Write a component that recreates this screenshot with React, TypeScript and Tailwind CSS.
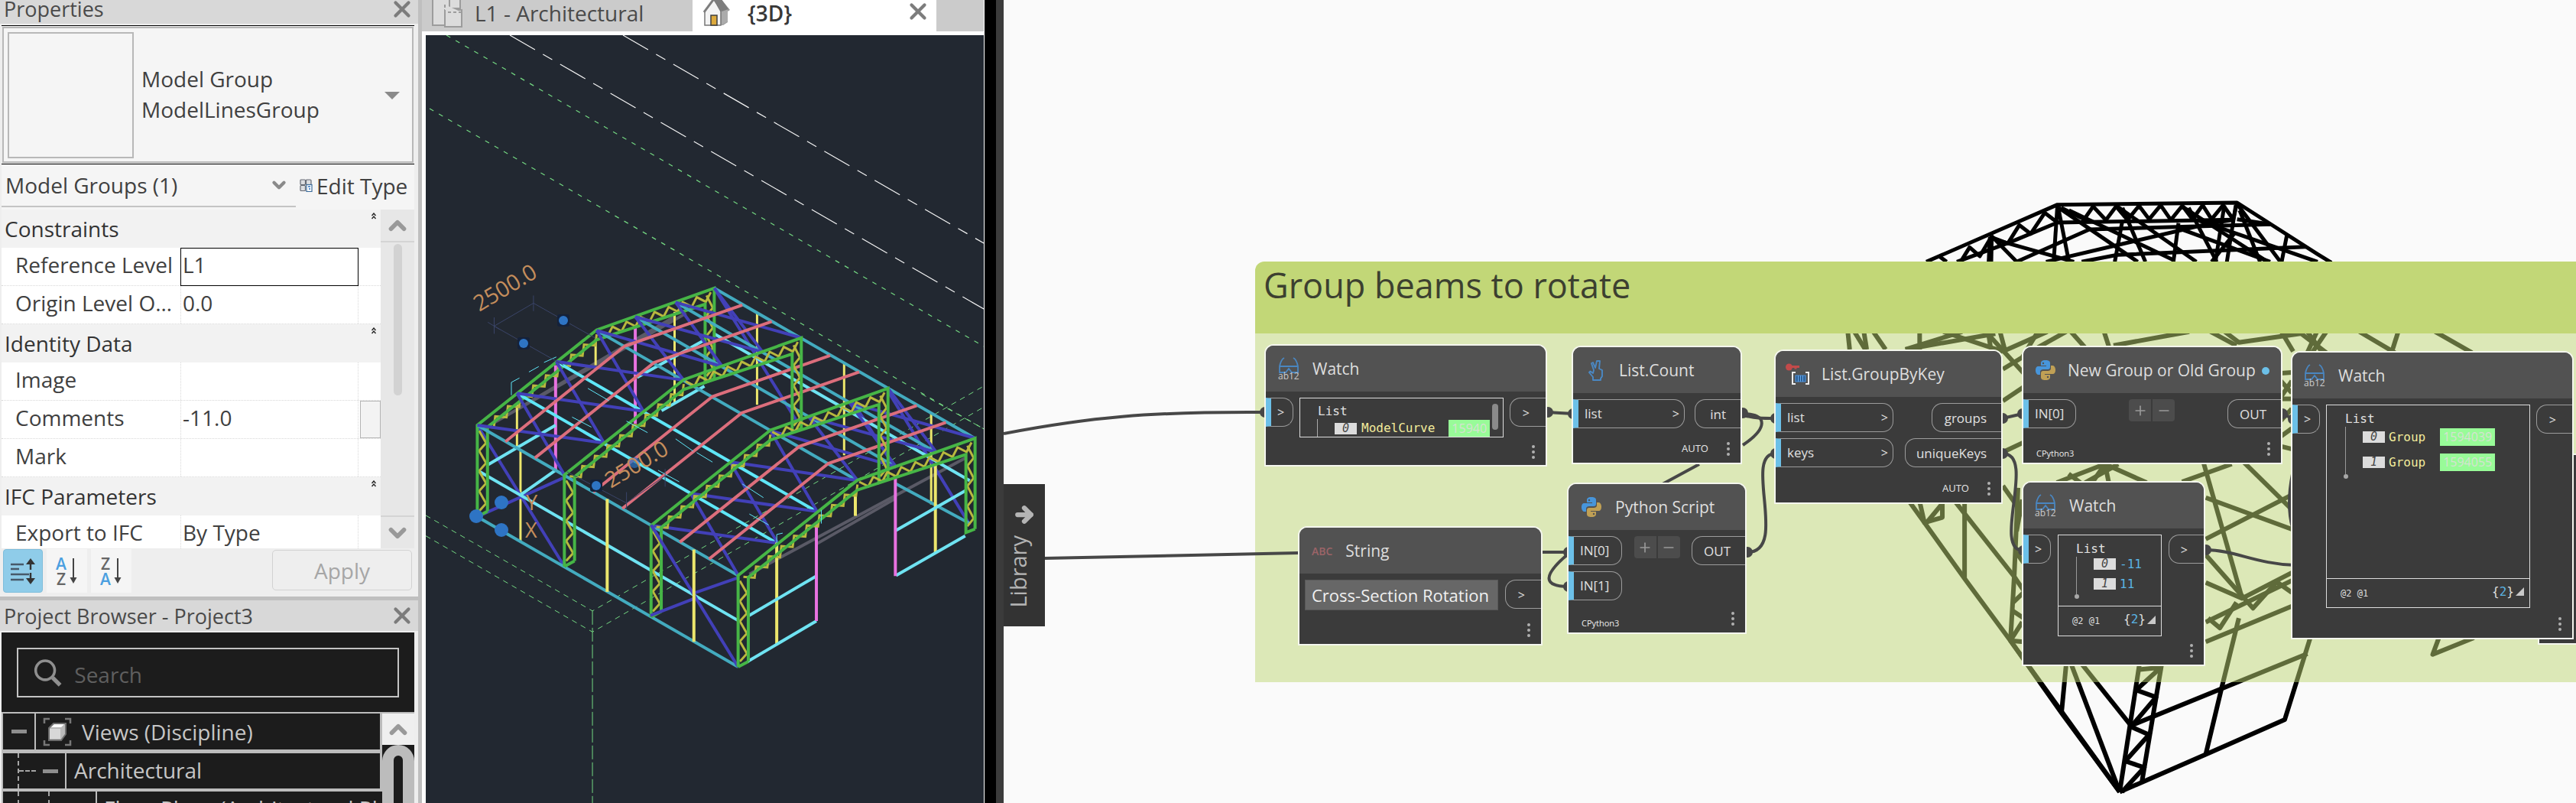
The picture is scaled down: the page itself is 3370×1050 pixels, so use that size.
import React from "react";
import { X, Plus, Minus, ArrowRight, ChevronDown, ChevronUp } from "lucide-react";

type Pt = [number, number];

/* ---------- Properties palette ---------- */

function PropHeader({ title }: { title: string }) {
  return (
    <div className="flex h-[50px] items-center justify-between bg-[#f2f2f2] pl-1 pr-[6px]">
      <h3 className="text-[28px] leading-[50px] text-[#333]">{title}</h3>
      <svg viewBox="0 0 6 9" className="mt-[-33px] h-[9px] w-[6px]" fill="none" stroke="#222" strokeWidth="1.4">
        <path d="M.5 4 3 1l2.5 3M.5 8 3 5l2.5 3" />
      </svg>
    </div>
  );
}

function PropRow({ label, value, boxed, button }: { label: string; value: string; boxed?: boolean; button?: boolean }) {
  const id = "prop-" + label.toLowerCase().replace(/[^a-z]+/g, "-");
  return (
    <div className="grid h-[50px] grid-cols-[234px_233px_1fr] border-b border-dotted border-[#d8d8d8] bg-white text-[28px] text-[#404040]">
      <label htmlFor={id} className="truncate pl-[18px] leading-[44px]">
        {label}
      </label>
      <input
        id={id}
        defaultValue={value}
        className={
          boxed
            ? "w-full border border-black bg-white pb-[6px] pl-[2px] outline-none"
            : "w-full border-x border-dotted border-[#d8d8d8] bg-white pb-[6px] pl-[2px] outline-none"
        }
      />
      {button ? (
        <div className="flex items-stretch pl-[2px]">
          <button aria-label="Browse" className="w-[27px] border border-[#b4b4b4] bg-[#f3f3f3]" />
        </div>
      ) : (
        <span />
      )}
    </div>
  );
}

function SortIcon({ top, bottom }: { top: string; bottom: string }) {
  const blue = "text-[#4a9fe0]";
  const gray = "text-[#666]";
  return (
    <span className="flex items-center gap-[3px]">
      <span className="flex flex-col text-[21px] font-semibold leading-[20px]">
        <span className={top === "A" ? blue : gray}>{top}</span>
        <span className={bottom === "A" ? blue : gray}>{bottom}</span>
      </span>
      <svg viewBox="0 0 12 34" className="h-[34px] w-3" fill="#444" stroke="#444" strokeWidth="2">
        <path d="M6 0v26" />
        <path d="M1.5 25h9L6 33z" stroke="none" />
      </svg>
    </span>
  );
}

function Properties() {
  return (
    <section className="shrink-0">
      <header className="flex h-[31px] items-center justify-between bg-[#d8d8d8] pl-[5px] pr-[4px]">
        <h2 className="mt-[-8px] text-[27px] leading-[32px] text-[#4a4a4a]">Properties</h2>
        <button aria-label="Close properties" className="-mt-2">
          <X size={34} strokeWidth={3} color="#7c7c7c" />
        </button>
      </header>
      <div className="mx-[2px] mr-[5px] pt-[2px]">
        <div className="border-y border-black py-[1px]">
          <div className="mx-[1px] flex h-[178px] items-start border-2 border-[#b8b8b8] bg-[#f5f5f5] p-[5px]">
            <div className="h-[165px] w-[165px] border-2 border-[#b8b8b8]" />
            <p className="ml-[10px] mt-[41px] text-[28px] leading-[40px] text-[#404040]">
              Model Group
              <br />
              ModelLinesGroup
            </p>
            <button aria-label="Choose type" className="ml-auto mr-[11px] mt-[78px]">
              <svg viewBox="0 0 20 10" className="h-[10px] w-5" fill="#8a8a8a">
                <path d="M0 0h20L10 10z" />
              </svg>
            </button>
          </div>
        </div>
        <div className="flex h-[59px] bg-[#f5f5f5] text-[28px] text-[#404040]">
          <button className="mb-[3px] flex w-[385px] items-center justify-between border-b-2 border-[#c4c4c4] pl-[5px] pr-[9px]">
            <span>Model Groups (1)</span>
            <ChevronDown size={26} strokeWidth={4} color="#8a8a8a" />
          </button>
          <button className="ml-[5px] flex items-center gap-[5px] pb-1">
            <svg viewBox="0 0 17 17" className="h-[17px] w-[17px]" fill="#dcdde0" stroke="#666b75" strokeWidth="1.2">
              <rect x="1" y="1" width="6.5" height="6.5" rx="1" />
              <rect x="8.5" y="1" width="6.5" height="6.5" rx="1" />
              <rect x="1" y="8.5" width="6.5" height="7" rx="1" />
              <rect x="9" y="7.5" width="7" height="9" fill="#fff" stroke="#3d6d9c" />
              <path d="M11 10h3M12 13h2" stroke="#2a6fc0" strokeWidth="1.6" />
            </svg>
            <span>Edit Type</span>
          </button>
        </div>
        <div className="flex h-[443px]">
          <div className="w-[496px] overflow-hidden">
            <PropHeader title="Constraints" />
            <PropRow label="Reference Level" value="L1" boxed />
            <PropRow label="Origin Level Offset" value="0.0" />
            <PropHeader title="Identity Data" />
            <PropRow label="Image" value="" />
            <PropRow label="Comments" value="-11.0" button />
            <PropRow label="Mark" value="" />
            <PropHeader title="IFC Parameters" />
            <PropRow label="Export to IFC" value="By Type" />
          </div>
          <div className="flex flex-1 flex-col items-center bg-[#e7e7e7]">
            <div className="flex h-[43px] w-full items-center justify-center border-b-2 border-[#d4d4d4]">
              <ChevronUp size={34} strokeWidth={4} color="#999" />
            </div>
            <div className="mt-[2px] h-[198px] w-[11px] rounded-full bg-[#d2d2d2]" />
            <div className="mt-auto flex h-[43px] w-full items-center justify-center border-t-2 border-[#d4d4d4]">
              <ChevronDown size={34} strokeWidth={4} color="#999" />
            </div>
          </div>
        </div>
      </div>
      <div className="flex h-[63px] items-start gap-[5px] pl-1 pr-[8px] pt-[1px]">
        <button aria-label="Sort by order" className="flex h-[57px] w-[52px] items-center justify-center rounded-[4px] border border-[#7fbddb] bg-[#8fcce9]">
          <svg viewBox="0 0 34 34" className="h-[34px] w-[34px]" stroke="#333" fill="#333" strokeWidth="2.4">
            <path d="M1 8h17M1 14h11M1 21h24M1 28h17" stroke="#47596a" />
            <path d="M27 4v11M27 19v11" />
            <path d="M21 8h12L27 0zM21 26h12l-6 8z" stroke="none" />
          </svg>
        </button>
        <button aria-label="Sort ascending" className="flex h-[57px] w-[53px] items-center justify-center bg-[#f5f5f5]">
          <SortIcon top="A" bottom="Z" />
        </button>
        <button aria-label="Sort descending" className="flex h-[57px] w-[53px] items-center justify-center bg-[#f5f5f5]">
          <SortIcon top="Z" bottom="A" />
        </button>
        <button disabled className="ml-auto mt-[1px] h-[53px] w-[183px] rounded-[5px] border border-[#d2d2d2] text-[28px] text-[#a6a6a6]">
          Apply
        </button>
      </div>
    </section>
  );
}

/* ---------- Project browser ---------- */

function ProjectBrowser() {
  return (
    <section className="flex min-h-0 flex-1 flex-col border-t-[5px] border-[#bfbfbf]">
      <header className="flex h-[40px] shrink-0 items-center justify-between bg-[#d8d8d8] pl-[5px] pr-[4px]">
        <h2 className="pt-[2px] text-[27px] leading-[38px] text-[#4a4a4a]">Project Browser - Project3</h2>
        <button aria-label="Close project browser">
          <X size={34} strokeWidth={3} color="#7c7c7c" />
        </button>
      </header>
      <div className="ml-[2px] mr-[5px] mt-[2px] shrink-0 bg-[#1c1c1c] px-5 pb-[19px] pt-5">
        <label className="flex h-[65px] items-center gap-[16px] border-2 border-[#c4c4c4] pl-[20px]">
          <svg viewBox="0 0 42 42" className="h-[42px] w-[42px]" fill="none" stroke="#8f8f8f" strokeWidth="4">
            <circle cx="17" cy="17" r="14" />
            <path d="m28 28 11 11" strokeWidth="6" />
          </svg>
          <input
            type="search"
            aria-label="Search"
            placeholder="Search"
            className="w-full bg-transparent pt-[4px] text-[28px] text-[#6a6a6a] outline-none placeholder:text-[#5f5f5f]"
          />
        </label>
      </div>
      <div className="ml-[2px] mr-[5px] flex min-h-0 flex-1 overflow-hidden border-l-2 border-t-2 border-[#bcbcbc]">
        <div className="flex w-[496px] shrink-0 flex-col text-[28px] text-[#c6c6c6]">
          <div className="flex h-[52px] shrink-0 border-b-[5px] border-[#bcbcbc] bg-[#1c1c1c]">
            <span className="flex w-[43px] items-center justify-center border-r-2 border-[#bcbcbc]">
              <span className="h-[5px] w-5 bg-[#8e8e8e]" />
            </span>
            <span className="flex flex-1 items-center gap-[13px] border-r-[3px] border-[#bcbcbc] pl-[9px]">
              <svg viewBox="0 0 38 38" className="h-[38px] w-[38px]" fill="none">
                <path d="M2 8V2h7M29 2h7v6M36 30v6h-7M9 36H2v-6" stroke="#777" strokeWidth="2.5" />
                <path d="m8 14 6-6h16v14l-6 8H8z" fill="#b9b9b9" stroke="#6d6d6d" strokeWidth="2" />
                <path d="M9 15h14v13H9z" fill="#d8d8d8" />
                <path d="m11 13 4-4h13l-4 4z" fill="#fff" />
              </svg>
              Views (Discipline)
            </span>
          </div>
          <div className="flex h-[50px] shrink-0 border-b-[4px] border-[#bcbcbc] bg-[#1c1c1c]">
            <span className="flex w-[83px] items-center border-r-2 border-[#bcbcbc] pl-[19px]">
              <span className="h-full border-l-2 border-dashed border-[#a5a5a5]" />
              <span className="w-[22px] border-t-2 border-dashed border-[#a5a5a5]" />
              <span className="ml-[9px] h-[5px] w-5 bg-[#8e8e8e]" />
            </span>
            <span className="flex flex-1 items-center border-r-[3px] border-[#bcbcbc] pb-[2px] pl-[10px]">Architectural</span>
          </div>
          <div className="flex h-[50px] shrink-0 bg-[#1c1c1c]">
            <span className="flex w-[123px] border-r-2 border-[#bcbcbc] pl-[19px]">
              <span className="h-full border-l-2 border-dashed border-[#a5a5a5]" />
              <span className="ml-[38px] h-full border-l-2 border-dashed border-[#a5a5a5]" />
            </span>
            <span className="flex-1 overflow-hidden whitespace-nowrap pl-[9px] leading-[44px]">Floor Plans (Architectural Plan)</span>
          </div>
        </div>
        <div className="flex flex-1 flex-col bg-[#1c1c1c]">
          <div className="flex h-[41px] shrink-0 items-center justify-center bg-[#efefef]">
            <ChevronUp size={34} strokeWidth={4} color="#999" />
          </div>
          <div className="flex h-[160px] shrink-0 justify-center rounded-t-full bg-[#bcbcbc] pt-[14px]">
            <div className="w-[12px] rounded-t-full bg-[#1c1c1c]" />
          </div>
        </div>
      </div>
    </section>
  );
}

/* ---------- 3D view ---------- */

const add = (p: Pt, d: Pt): Pt => [p[0] + d[0], p[1] + d[1]];
const str = (pts: Pt[]) => pts.map((p) => p.join(",")).join(" ");

const RAFTER: Pt[] = [[75, 605], [188, 488], [300, 372], [415, 258], [525, 208], [640, 155], [750, 103]];
const FRAME_OFFSETS: Pt[] = [[0, 0], [248, 182], [495, 367], [743, 550]];
const PURLIN_COLORS = ["#43abbf", "#5fe6f7", "#5fe6f7", "#43abbf", "#43abbf", "#43abbf", "#43abbf"];

function zigzag(a: Pt, b: Pt, inset: Pt, n: number): Pt[] {
  const pts: Pt[] = [];
  for (let i = 0; i <= n; i++) {
    const t = i / n;
    const p: Pt = [a[0] + (b[0] - a[0]) * t, a[1] + (b[1] - a[1]) * t];
    pts.push(i % 2 ? add(p, inset) : p);
  }
  return pts;
}

function Lines({ d, c, w = 3 }: { d: string[]; c: string; w?: number }) {
  return (
    <g stroke={c} strokeWidth={w} fill="none">
      {d.map((p) => (
        <polyline key={p} points={p} vectorEffect="non-scaling-stroke" />
      ))}
    </g>
  );
}

function Frame({ o }: { o: Pt }) {
  const at = (x: number, y: number): Pt => [x + o[0], y + o[1]];
  const green = [
    str([at(75, 940), at(75, 605), at(415, 256), at(750, 103), at(750, 435)]),
    str([at(104, 920), at(104, 612), at(415, 292), at(724, 162), at(724, 448), at(750, 435)]),
    str([at(75, 940), at(104, 920)]),
  ];
  const web = [
    str(zigzag(at(90, 610), at(415, 272), [14, 22], 18)),
    str(zigzag(at(420, 262), at(740, 118), [6, 26], 16)),
    str(zigzag(at(80, 625), at(80, 920), [20, 8], 8)),
    str(zigzag(at(728, 130), at(728, 425), [18, 8], 8)),
  ];
  return (
    <>
      <Lines d={web} c="#b9b83e" w={3} />
      <Lines d={green} c="#46b546" w={4} />
    </>
  );
}

function BuildingModel() {
  const purlins = RAFTER.map((p, i) => ({ d: str([p, add(p, [743, 550])]), c: PURLIN_COLORS[i] }));
  const braces: string[] = [];
  for (const base of [FRAME_OFFSETS[0], FRAME_OFFSETS[2]]) {
    for (let i = 0; i < 6; i++) {
      const a = add(RAFTER[i], base);
      const b = add(RAFTER[i + 1], base);
      const c = add(RAFTER[i], add(base, [248, 182]));
      const d = add(RAFTER[i + 1], add(base, [248, 182]));
      braces.push(str([a, d]), str([b, c]));
    }
  }
  const ties: Pt[] = [[0, 0], [84, 60], [250, 185], [333, 245], [497, 368], [580, 430]];
  return (
    <g transform="translate(33 294) scale(.4592 .3571)">
      <g stroke="#74d982" fill="none" strokeDasharray="7 6" strokeWidth="1">
        <polyline points="-72,935 403,1285 1520,460" vectorEffect="non-scaling-stroke" />
        <polyline points="-72,1010 403,1362 1520,537" vectorEffect="non-scaling-stroke" />
        <polyline points="403,1285 403,2000" vectorEffect="non-scaling-stroke" strokeDasharray="18 4" />
        <polyline points="1340,490 1520,620" vectorEffect="non-scaling-stroke" />
      </g>
      <Lines c="#5a5a66" w={4} d={["110,605 670,195", "190,545 640,205", "850,1150 1465,725", "1041,1040 1268,872"]} />
      <Lines c="#e872e0" w={4} d={["298,385 298,770", "525,245 525,600"]} />
      <Lines c="#ece66c" w={3} d={["188,525 188,690", "198,700 198,1030", "412,290 412,385", "637,190 637,525", "872,190 872,530", "1120,380 1120,715", "1368,560 1368,895"]} />
      <Lines c="#4240b8" w={4} d={["75,605 322,1120", "75,940 325,795", "750,103 985,590", "1245,480 1478,970", "1150,530 1260,750"]} />
      <Lines c="#43abbf" w={4} d={["75,940 818,1490", "1268,820 1478,965"]} />
      <Lines c="#6fe3f2" w={4} d={["75,770 818,1320", "750,270 1478,808", "105,750 298,605", "198,860 298,770", "530,430 720,295", "600,552 722,462"]} />
      <Frame o={FRAME_OFFSETS[0]} />
      {purlins.map((p) => (
        <Lines key={p.d} d={[p.d]} c={p.c} w={4} />
      ))}
      <Lines c="#4240b8" w={4} d={braces} />
      <Lines c="#dc6e7c" w={4} d={ties.map((t) => str([add([155, 665], t), add([495, 315], t), add([830, 165], t)]))} />
      <Frame o={FRAME_OFFSETS[1]} />
      <Frame o={FRAME_OFFSETS[2]} />
      <Lines c="#4240b8" w={4} d={["570,970 818,1490", "568,1302 692,1240", "692,1220 818,1163"]} />
      <Lines c="#ece66c" w={4} d={["445,875 445,1215", "692,1060 692,1398", "928,1035 928,1405", "1152,850 1152,937", "1380,745 1380,1072"]} />
      <Lines c="#6fe3f2" w={4} d={["845,1305 1041,1157", "845,1470 1041,1322", "1268,990 1465,845", "1268,1155 1465,1010"]} />
      <Lines c="#e872e0" w={4} d={["1041,965 1041,1322", "1266,800 1266,1157"]} />
      <Frame o={FRAME_OFFSETS[3]} />
      <Lines c="#5fe6f7" w={1} d={["172,495 172,448 195,432", "222,410 250,390", "265,375 300,355", "390,470 450,515", "500,590 560,632", "345,575 400,612", "640,655 690,700", "590,770 650,812", "830,820 890,870", "850,930 905,970", "928,1035 928,1005 945,1000", "1055,915 1055,965", "700,705 745,740"]} />
      <Lines c="#3a4468" w={1} d={["105,228 140,255", "123,210 123,270", "235,130 235,187", "123,242 235,158 410,285", "123,242 320,385", "330,775 500,890 610,790", "500,850 500,912", "610,765 610,830"]} />
    </g>
  );
}

function Marker({ x, y, r = 6 }: { x: number; y: number; r?: number }) {
  return (
    <g>
      <rect x={x - r - 2} y={y - r - 2} width={2 * r + 4} height={2 * r + 4} rx="3" fill="#14213a" />
      <circle cx={x} cy={y} r={r} fill="#2e74c4" />
    </g>
  );
}

function View3D() {
  return (
    <section className="flex w-[736px] shrink-0 flex-col border-r border-white bg-white">
      <nav className="flex h-[41px] shrink-0 bg-[#cbcbcb] text-[28px] text-[#4a4a4a]">
        <button className="flex w-[354px] items-start pl-[12px]">
          <svg viewBox="0 0 42 36" className="h-9 w-[42px]" fill="#dcdcdc" stroke="#9c9c9c" strokeWidth="2">
            <path d="M2-4h22v37H2z" />
            <path d="M18 13h22v22H18zM24-4h14v15H24z" />
            <path d="M18 6v10h22" strokeDasharray="4 3" />
          </svg>
          <span className="ml-[15px] mt-[-2px] leading-[38px]">L1 - Architectural</span>
        </button>
        <div className="flex w-[319px] items-start bg-white pl-[13px]">
          <svg viewBox="0 0 37 34" className="h-[34px] w-[37px]">
            <path d="M1 15 14-3h9l13 16-3 2v14l-6 4H3V16z" fill="#9a9a9a" />
            <path d="M15-1 3 15v18h21V15z" fill="#f4f4f4" stroke="#777" strokeWidth="1.5" />
            <path d="M25 13v20l8-5V13l-4-6z" fill="#ababab" />
            <path d="M15-3 1 15l2 2L15 1l10 14 9-3L22-5z" fill="#7d7d7d" />
            <path d="M11 20h8v13h-8z" fill="#dca93c" stroke="#3f3f3f" strokeWidth="1.5" />
          </svg>
          <button className="ml-[22px] mt-[-2px] font-semibold leading-[38px] text-[#383838]">{"{3D}"}</button>
          <button aria-label="Close view" className="ml-auto mr-[7px] mt-[-2px]">
            <X size={34} strokeWidth={3} color="#7c7c7c" />
          </button>
        </div>
      </nav>
      <div className="ml-[5px] mt-[5px] min-h-0 flex-1 overflow-hidden bg-[#222831]">
        <svg width="730" height="1004" className="block">
          <g strokeWidth="1.2" fill="none">
            <path d="M27 0 730 407M5 96 730 515" stroke="#74d982" strokeDasharray="6 8" />
            <path d="M110 0 730 358M258 0 730 272" stroke="#f4f4f4" strokeDasharray="38 12 14 12" />
          </g>
          <BuildingModel />
          <Marker x={180} y={373} />
          <Marker x={128} y={403} />
          <Marker x={223} y={589} />
          <g fill="#2e74c4">
            <circle cx="66" cy="629" r="9" />
            <circle cx="99" cy="611" r="9" />
            <circle cx="99" cy="647" r="9" />
            <circle cx="273" cy="559" r="7" opacity=".7" />
          </g>
          <g fill="#c58e5c" fontFamily="'Open Sans', sans-serif" fontSize="29">
            <text transform="translate(70 362) rotate(-31)">2500.0</text>
            <text transform="translate(242 593) rotate(-31)">2500.0</text>
            <text x="131" y="621" fontSize="27">Y</text>
            <text x="130" y="657" fontSize="27">X</text>
          </g>
        </svg>
      </div>
    </section>
  );
}

/* ---------- Graph nodes ---------- */

function WatchIcon() {
  return (
    <svg viewBox="0 0 28 31" className="h-[31px] w-7" fill="none" stroke="#4a86c0" strokeWidth="1.8">
      <path d="M8 1C4 3 3 7 2 12v8h8l4-5 4 5h8v-8C25 7 24 3 20 1M2 12h24" />
      <text x="0" y="29" fontSize="12" fill="#ccc" stroke="none" fontFamily="'Open Sans', sans-serif">ab12</text>
    </svg>
  );
}

function PythonIcon() {
  return (
    <svg viewBox="0 0 26 26" className="h-[26px] w-[26px]">
      <path d="M13 0C8 0 7 2 7 4v3h7v1H4C1 8 0 10 0 13.5S2 19 4 19h2v-4c0-2 2-3 4-3h6c2 0 3-1 3-3V4c0-3-2-4-6-4z" fill="#4795da" />
      <path d="M13 26c5 0 6-2 6-4v-3h-7v-1h10c3 0 4-2 4-5.5S24 7 22 7h-2v4c0 2-2 3-4 3h-6c-2 0-3 1-3 3v5c0 3 2 4 6 4z" fill="#c0a055" />
      <circle cx="10" cy="4" r="1.2" fill="#525252" />
      <circle cx="16" cy="22" r="1.2" fill="#525252" />
    </svg>
  );
}

function CountIcon() {
  return (
    <svg viewBox="0 0 20 27" className="h-[27px] w-5" fill="none" stroke="#4a88c4" strokeWidth="1.9" strokeLinejoin="round">
      <path d="M6 26v-4L1 16l1.5-1.5L6 17l1-4L4 4l2-1 3 7 2-9h4l-1 10 4 2v8l-2 3v2z" />
    </svg>
  );
}

function GroupKeyIcon() {
  return (
    <svg viewBox="0 0 31 29" className="h-[29px] w-[31px]" fill="none">
      <circle cx="4.5" cy="5" r="4.5" fill="#c24a4a" />
      <path d="M8 4.5h10M13 4.5v3" stroke="#c24a4a" strokeWidth="3" />
      <path d="M13 12H9v15h4M26 12h4v15h-4" stroke="#eee" strokeWidth="2" />
      <path d="M13 16h13v8H13z" fill="#2d5f94" stroke="#4c90d8" strokeWidth="1.2" />
      <path d="M16.5 16v8M19.5 16v8M22.5 16v8" stroke="#63a8ee" />
    </svg>
  );
}

type PortSpec = { label?: string; arrow?: boolean; w: string };

function InPort({ label, arrow, w }: PortSpec) {
  return (
    <div className={"flex h-[38px] items-center justify-between rounded-r-[14px] border border-l-[7px] border-[#9c9c9c] border-l-[#6cc0e8] pl-2 pr-[6px] text-[17px] text-[#e0e0e0] " + w}>
      {label && <span>{label}</span>}
      {arrow && <span className="text-[16px]">&gt;</span>}
    </div>
  );
}

function OutPort({ label, w }: PortSpec) {
  return (
    <div className={"flex h-[38px] items-center justify-end rounded-l-[14px] border border-r-0 border-[#9c9c9c] pr-[19px] pt-[2px] text-[17px] text-[#e0e0e0] " + w}>
      {label ?? <span className="pr-[2px] text-[16px]">&gt;</span>}
    </div>
  );
}

function PlusMinus() {
  return (
    <div className="flex gap-[2px]">
      <button aria-label="Add input" className="flex h-[29px] w-[29px] items-center justify-center rounded-l-[4px] bg-[#4c4c4c]">
        <Plus size={20} strokeWidth={2} color="#999" />
      </button>
      <button aria-label="Remove input" className="flex h-[29px] w-[29px] items-center justify-center rounded-r-[4px] bg-[#4c4c4c]">
        <Minus size={20} strokeWidth={2} color="#999" />
      </button>
    </div>
  );
}

type NodeProps = {
  place: string;
  icon?: React.ReactNode;
  title: string;
  titleGap?: string;
  ins?: PortSpec[];
  outs?: PortSpec[];
  children?: React.ReactNode;
  auto?: boolean;
  engine?: string;
  modified?: boolean;
};

function GraphNode({ place, icon, title, titleGap = "gap-[17px] pl-4", ins = [], outs = [], children, auto, engine, modified }: NodeProps) {
  return (
    <article className={"absolute flex flex-col overflow-hidden rounded-t-[12px] border-2 border-[#f4f6ee] bg-[#3b3b3b] " + place}>
      <header className={"flex h-[60px] shrink-0 items-center bg-[#525252] " + titleGap}>
        {icon}
        <h4 className="whitespace-nowrap text-[21px] leading-[28px] text-[#dedede]">{title}</h4>
        {modified && <span className="-ml-2 mt-[2px] h-[10px] w-[10px] rounded-full bg-[#6cc0e8]" />}
      </header>
      <div className="flex items-start justify-between pt-[8px]">
        {ins.length > 0 && (
          <div className="flex flex-col gap-[8px]">
            {ins.map((p, i) => (
              <InPort key={i} {...p} />
            ))}
          </div>
        )}
        {children}
        <div className="flex flex-col items-end gap-[8px]">
          {outs.map((p, i) => (
            <OutPort key={i} {...p} />
          ))}
        </div>
      </div>
      <footer className="mt-auto flex h-[37px] shrink-0 items-center pl-[17px] pr-[14px]">
        {engine && <span className="self-end pb-[5px] text-[11px] leading-[14px] text-[#eee]">{engine}</span>}
        <span className="ml-auto text-[13px] text-[#e6e6e6]">{auto ? "AUTO" : ""}</span>
        <button aria-label={title + " options"} className="ml-[24px] flex flex-col gap-[3px]">
          <i className="h-1 w-1 rounded-full bg-[#b0b0b0]" />
          <i className="h-1 w-1 rounded-full bg-[#b0b0b0]" />
          <i className="h-1 w-1 rounded-full bg-[#b0b0b0]" />
        </button>
      </footer>
    </article>
  );
}

function Index({ n }: { n: number }) {
  return <span className="flex h-[15px] w-[29px] items-center justify-center bg-[#dcdcdc] text-[15px] italic leading-[15px] text-[#444]">{n}</span>;
}

function Levels() {
  return (
    <div className="flex items-center justify-between border-t border-[#ddd] pb-1 pl-[18px] pr-[7px] text-[#ddd]">
      <span className="pt-1 text-[12px] leading-[16px]">@2 @1</span>
      <span className="flex items-center gap-[2px] text-[16px] leading-[16px]">
        <span>
          {"{"}
          <b className="font-normal text-[#5ab4e4]">2</b>
          {"}"}
        </span>
        <svg viewBox="0 0 11 11" className="h-[11px] w-[11px]" fill="#c9c9c9">
          <path d="M11 0v11H0z" />
        </svg>
      </span>
    </div>
  );
}

const MONO = "font-['DejaVu_Sans_Mono',monospace] ";
const GREEN_ID = "bg-[#98fb98] font-['Open_Sans',sans-serif] text-[16px] text-[#d6e2d2] px-[4px] leading-[23px] ";

function LibraryTab() {
  return (
    <button className="absolute left-0 top-[633px] flex h-[186px] w-[54px] flex-col items-center gap-[12px] bg-[#333] pt-[25px]">
      <ArrowRight size={30} strokeWidth={5} color="#b4b4b4" />
      <span className="mr-4 rotate-180 text-[29px] leading-[36px] text-[#b4b4b4] [writing-mode:vertical-rl]">Library</span>
    </button>
  );
}

const TRUSS_TOP = [
  "30,262 545,38 1250,30 1566,232 1620,265",
  "150,262 360,185 545,108 1240,97",
  "80,240 110,262", "165,262 200,205 240,240 285,165 350,190 395,118 440,152 495,70 545,108",
  "545,38 530,262", "550,60 590,262",
  "560,50 650,95 685,45 735,98 775,45 820,98 865,42 905,95 950,40 990,98 1035,42 1075,95 1115,40 1150,95 1195,40 1235,95 1250,30",
  "285,160 385,262", "280,165 275,262", "287,165 285,262", "300,175 610,262",
  "550,50 860,262", "590,60 1000,255", "780,45 1090,262", "800,50 890,262",
  "1035,45 1370,262", "1060,50 1170,262", "1250,35 1420,262", "1260,60 1340,262",
  "800,100 770,262", "1020,110 1000,262", "1245,40 1210,262", "1200,40 1165,262", "1445,160 1425,262",
  "385,262 670,135 1380,115", "500,262 1150,110 1240,97", "640,262 780,235 1520,203",
  "1020,130 1380,262", "1100,100 1566,262", "1150,262 1240,150", "1250,95 1380,115",
];

const TRUSS_BODY = [
  "158,805 190,858 275,1000 372,1157 480,1340 603,1540", "275,805 275,1000", "255,805 380,995",
  "180,805 190,858 228,845 228,805", "195,858 228,810",
  "603,1540 372,1157 380,995 388,770", "372,1157 397,1110", "375,1080 400,1100", "380,995 400,1030", "378,1060 400,1035", "372,1157 400,1160",
  "385,880 397,800", "382,930 400,960", "356,765 400,840", "356,680 400,655", "356,550 400,515",
  "490,1215 480,1340", "500,1215 603,1540", "522,1215 627,1372",
  "645,1215 603,1540", "692,1215 650,1515", "645,1230 690,1225 638,1282 680,1300 627,1375 665,1395 615,1462 655,1478 608,1540",
  "627,1372 1000,1190", "603,1540 785,1445 952,1357 1006,1150", "785,1445 818,1280 855,1100",
  "780,705 862,1050", "785,795 967,875", "785,900 967,788", "785,1010 862,1050 967,985", "785,940 885,1075 935,1008 967,1035",
  "785,1110 967,1005", "785,1160 967,1070", "790,1100 815,1125 850,1060", "865,705 967,825", "735,755 840,710",
  "470,757 572,710 660,757", "530,757 600,710", "545,757 572,710 580,757", "495,735 520,757",
  "28,375 32,420", "42,375 65,420", "62,375 68,420", "82,375 108,420", "180,375 180,420", "150,420 270,375", "230,375 356,425", "150,420 340,380",
  "325,375 330,415", "350,375 360,420", "356,425 450,375", "320,375 400,480", "356,470 397,440 430,375", "430,415 490,375", "500,375 530,415", "590,410 750,375", "570,375 580,412",
  "825,375 855,402 985,380", "850,410 795,375", "945,375 970,425", "985,378 1040,428", "1040,375 1010,428", "1020,375 1000,428", "1000,375 1030,425", "1110,375 1185,428", "1192,375 1178,428", "1270,375 1348,428",
  "944,480 967,478", "944,500 967,530", "944,540 967,500", "944,545 967,545", "944,640 967,620", "944,665 967,672", "944,600 967,570",
  "1278,1150 1265,1192 1352,1150",
];

function BackgroundGeometry() {
  return (
    <svg className="pointer-events-none absolute left-0 top-0 h-[1050px] w-[2057px]" fill="none" stroke="#000" strokeLinejoin="round">
      <g transform="translate(1197 255) scale(.3333)" strokeWidth="5">
        {TRUSS_TOP.map((p) => (
          <polyline key={p} points={p} vectorEffect="non-scaling-stroke" />
        ))}
      </g>
      <g transform="translate(1087 240) scale(.6186 .5166)" strokeWidth="6">
        {TRUSS_BODY.map((p) => (
          <polyline key={p} points={p} vectorEffect="non-scaling-stroke" />
        ))}
      </g>
    </svg>
  );
}

const DOTS: Pt[] = [[342, 539], [712, 539], [745, 541], [967, 540], [1010, 547], [1010, 593], [1307, 547], [1307, 593], [973, 722], [739, 722], [739, 767], [1333, 541], [1673, 541], [1687, 548], [1334, 720], [1573, 719]];

function Wires() {
  return (
    <svg className="pointer-events-none absolute left-0 top-0 h-[1050px] w-[2057px]" fill="none" stroke="#474747" strokeWidth="4">
      <path d="M0 567C110 546 190 538 342 539" />
      <path d="M54 730 386 723M704 722h35" />
      <path d="M739 724C705 752 705 767 739 767" />
      <path d="M712 539 745 541M967 543C985 547 990 547 1010 547" />
      <path d="M967 541C1000 541 1000 560 967 582M910 607 860 634" />
      <path d="M973 722C1028 722 966 593 1010 593" />
      <path d="M1307 547 1333 541M1307 593C1352 593 1292 720 1334 720" />
      <path d="M1673 541 1687 548" />
      <path d="M1573 719C1610 719 1640 738 1690 739" />
      <path d="M1686 620Q1678 660 1686 690" />
      <g fill="#474747" stroke="none">
        {DOTS.map(([x, y]) => (
          <circle key={x + "-" + y} cx={x} cy={y} r="7" />
        ))}
      </g>
    </svg>
  );
}

function Workspace() {
  return (
    <main className="relative min-w-0 flex-1 overflow-hidden bg-[#fafafa]">
      <BackgroundGeometry />
      <section className="absolute left-[329px] right-0 top-[342px] h-[550px] overflow-hidden rounded-tl-[12px]">
        <h2 className="h-[94px] bg-[#c2d777] pl-[11px] text-[45px] leading-[62px] text-[#3c4030]">Group beams to rotate</h2>
        <div className="h-[456px] bg-[#bed574]/50" />
      </section>
      <Wires />

      <GraphNode
        place="left-[341px] top-[450px] h-[160px] w-[370px]"
        icon={<WatchIcon />}
        title="Watch"
        ins={[{ arrow: true, w: "w-[36px]" }]}
        outs={[{ w: "w-[47px]" }]}
      >
        <div className={MONO + "flex h-[52px] w-[267px] overflow-hidden border border-[#ddd] text-[16px] text-[#e2e2e2]"}>
          <div className="flex-1">
            <p className="pl-[23px] pt-[7px] leading-[20px]">List</p>
            <div className="ml-[22px] flex items-center border-l border-[#aaa] pl-[22px]">
              <Index n={0} />
              <span className="ml-[6px] text-[#f3ec9c]">ModelCurve</span>
              <span className={GREEN_ID + "ml-[18px]"}>15940</span>
            </div>
          </div>
          <span className="mr-[6px] mt-[7px] h-[34px] w-[8px] rounded-full bg-[#8a8a8a]" />
        </div>
      </GraphNode>

      <GraphNode
        place="left-[385px] top-[688px] h-[156px] w-[320px]"
        icon={<span className="text-[14px] font-semibold text-[#9c6468]">ABC</span>}
        title="String"
        outs={[{ w: "w-[47px]" }]}
      >
        <input
          aria-label="String value"
          defaultValue="Cross-Section Rotation"
          className="ml-[7px] h-[40px] w-[253px] border border-[#585858] bg-[#676767] pl-2 text-[22px] text-[#f0f0f0] outline-none"
        />
      </GraphNode>

      <GraphNode
        place="left-[743px] top-[452px] h-[155px] w-[223px]"
        icon={<CountIcon />}
        title="List.Count"
        titleGap="gap-[20px] pl-5"
        ins={[{ label: "list", arrow: true, w: "w-[146px]" }]}
        outs={[{ label: "int", w: "w-[60px]" }]}
        auto
      />

      <GraphNode
        place="left-[737px] top-[631px] h-[198px] w-[235px]"
        icon={<PythonIcon />}
        title="Python Script"
        titleGap="gap-[18px] pl-[17px]"
        ins={[{ label: "IN[0]", w: "w-[70px]" }, { label: "IN[1]", w: "w-[70px]" }]}
        outs={[{ label: "OUT", w: "w-[70px]" }]}
        engine="CPython3"
      >
        <PlusMinus />
      </GraphNode>

      <GraphNode
        place="left-[1008px] top-[457px] h-[202px] w-[299px]"
        icon={<GroupKeyIcon />}
        title="List.GroupByKey"
        titleGap="gap-[16px] pl-[13px]"
        ins={[{ label: "list", arrow: true, w: "w-[154px]" }, { label: "keys", arrow: true, w: "w-[154px]" }]}
        outs={[{ label: "groups", w: "w-[91px]" }, { label: "uniqueKeys", w: "w-[126px]" }]}
        auto
      />

      <article className="absolute left-[2007px] top-[593px] h-[250px] w-[80px] border-2 border-[#f4f6ee] bg-[#3b3b3b]" />

      <GraphNode
        place="left-[1332px] top-[452px] h-[155px] w-[341px]"
        icon={<PythonIcon />}
        title="New Group or Old Group"
        titleGap="gap-[16px] pl-4"
        ins={[{ label: "IN[0]", w: "w-[69px]" }]}
        outs={[{ label: "OUT", w: "w-[70px]" }]}
        engine="CPython3"
        modified
      >
        <PlusMinus />
      </GraphNode>

      <GraphNode
        place="left-[1332px] top-[629px] h-[242px] w-[240px]"
        icon={<WatchIcon />}
        title="Watch"
        titleGap="gap-[17px] pl-[15px]"
        ins={[{ arrow: true, w: "w-[36px]" }]}
        outs={[{ w: "w-[46px]" }]}
      >
        <div className={MONO + "grid h-[133px] w-[136px] grid-rows-[1fr_39px] border border-[#ddd] text-[16px] text-[#e2e2e2]"}>
          <div className="pl-[23px] pt-[8px]">
            <p className="leading-[20px]">List</p>
            <div className="flex h-[49px] flex-col gap-[11px] border-l border-[#999] pl-[22px] pt-[2px] leading-[15px]">
              <span className="flex gap-[5px] text-[#5ab4e4]"><Index n={0} />-11</span>
              <span className="flex gap-[5px] text-[#5ab4e4]"><Index n={1} />11</span>
            </div>
            <i className="-ml-[2px] block h-[6px] w-[6px] rounded-full bg-[#a8a8a8]" />
          </div>
          <Levels />
        </div>
      </GraphNode>

      <GraphNode
        place="left-[1684px] top-[459px] h-[377px] w-[370px]"
        icon={<WatchIcon />}
        title="Watch"
        titleGap="gap-[17px] pl-[15px]"
        ins={[{ arrow: true, w: "w-[36px]" }]}
        outs={[{ w: "w-[47px]" }]}
      >
        <div className={MONO + "grid h-[266px] w-[267px] grid-rows-[1fr_38px] border border-[#ddd] text-[16px] text-[#e2e2e2]"}>
          <div className="pl-[24px] pt-[8px]">
            <p className="leading-[20px]">List</p>
            <div className="flex h-[62px] flex-col gap-[10px] border-l border-[#999] pl-[22px] pt-[2px]">
              <span className="flex h-[23px] items-center gap-[5px] text-[#f3ec9c]">
                <Index n={0} />Group<span className={GREEN_ID + "ml-[14px]"}>1594039</span>
              </span>
              <span className="flex h-[23px] items-center gap-[5px] text-[#f3ec9c]">
                <Index n={1} />Group<span className={GREEN_ID + "ml-[14px]"}>1594055</span>
              </span>
            </div>
            <i className="-ml-[2px] block h-[6px] w-[6px] rounded-full bg-[#a8a8a8]" />
          </div>
          <Levels />
        </div>
      </GraphNode>

      <LibraryTab />
    </main>
  );
}

export default function App() {
  return (
    <div className="flex h-screen w-full overflow-hidden bg-[#eeeeee] font-['Open_Sans',sans-serif]">
      <aside className="flex w-[552px] shrink-0 flex-col border-r-[5px] border-[#bfbfbf]">
        <Properties />
        <ProjectBrowser />
      </aside>
      <View3D />
      <div className="w-[25px] shrink-0 border-r-[10px] border-[#3b3b3b] bg-black" />
      <Workspace />
    </div>
  );
}
